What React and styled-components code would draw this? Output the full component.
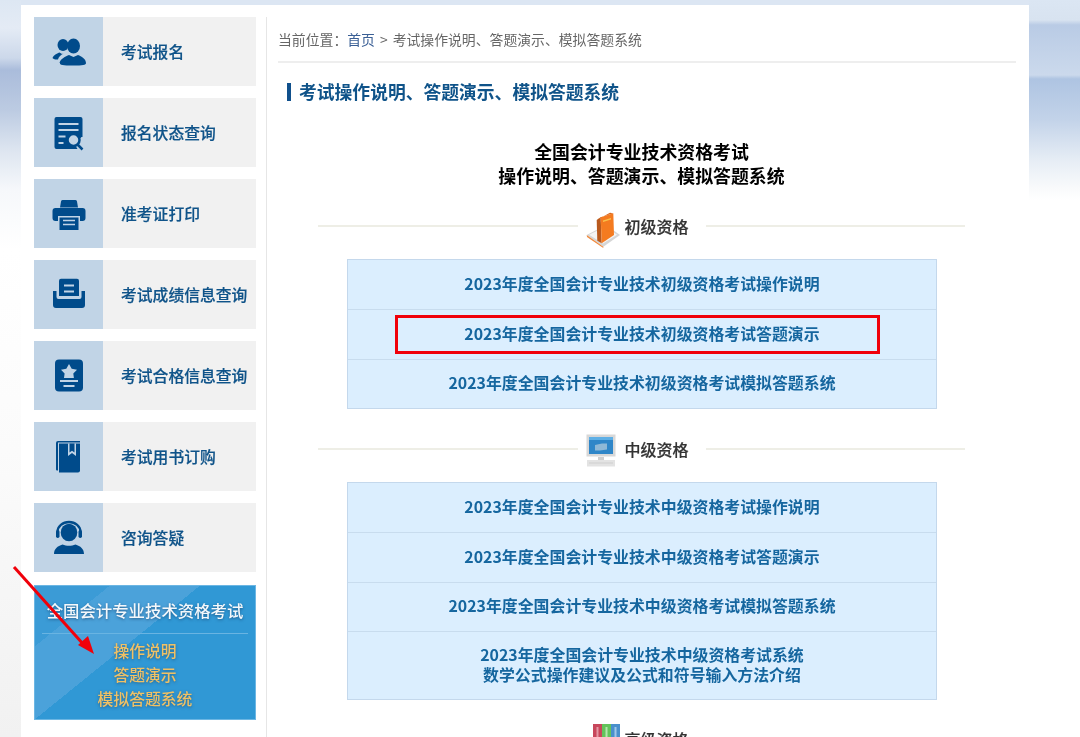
import React from 'react';
import styled, { createGlobalStyle } from 'styled-components';

const GlobalStyle = createGlobalStyle`
  html, body {
    margin: 0;
    padding: 0;
    background: #fff;
  }
  * {
    box-sizing: border-box;
  }
`;

const Page = styled.div`
  position: relative;
  width: 1080px;
  height: 737px;
  overflow: hidden;
  padding: 5px 51px 0 21px;
  font-family: 'Noto Sans CJK SC', 'Liberation Sans', sans-serif;
  filter: blur(0.35px);
  background:
    linear-gradient(
        180deg,
        #dde7f3 0,
        #e4ebf5 28px,
        #ccd8ea 58px,
        #aabcdb 70px,
        #bccbe2 110px,
        #dde5f0 150px,
        #f6f8fb 190px,
        #fff 250px,
        #fbfbfb 450px,
        #f1f1f1 737px
      )
      left top / 21px 100% no-repeat,
    linear-gradient(
        180deg,
        #dbe6f3 0,
        #d8e3f0 20px,
        #b9cbe5 25px,
        #cbd9ec 75px,
        #aec4e2 79px,
        #c3d3e9 120px,
        #e6edf5 160px,
        #fafbfc 190px,
        #fff 200px
      )
      right top / 51px 100% no-repeat,
    #dce6f3;
`;

const Panel = styled.div`
  display: flex;
  height: 732px;
  background: #fff;
  padding: 12px 13px 0;
`;

const Sidebar = styled.aside`
  width: 222px;
  flex: none;
  display: flex;
  flex-direction: column;
  gap: 12px;
`;

const NavItem = styled.a`
  display: flex;
  height: 69px;
  background: #f1f1f1;
`;

const NavIcon = styled.span`
  width: 69px;
  flex: none;
  display: flex;
  align-items: center;
  justify-content: center;
  background: #c1d4e6;
  color: #004b8b;
`;

const NavLabel = styled.span`
  padding: 0 0 1px 18px;
  align-self: center;
  font-size: 15.8px;
  font-weight: 500;
  color: #0f5389;
  -webkit-text-stroke: 0.2px #0f5389;
`;

const Banner = styled.div`
  height: 135px;
  margin-top: 1px;
  padding-top: 13px;
  text-align: center;
  background: linear-gradient(
    141deg,
    #3b9bd6 0 19.7%,
    #4ba2da 19.7% 42.9%,
    #3098d5 42.9%
  );
  box-shadow: inset 0 0 0 1px #6cb6e3;
`;

const BannerTitle = styled.div`
  font-size: 16.4px;
  line-height: 24px;
  font-weight: 500;
  color: #f4f8fb;
  text-shadow: 0 1px 3px rgba(20, 50, 90, 0.6);
`;

const BannerRule = styled.div`
  height: 1px;
  margin: 11px 8px 5px;
  background: #69b4e2;
`;

const BannerLink = styled.div`
  font-size: 15.8px;
  line-height: 24px;
  font-weight: 500;
  color: #f0c165;
  text-shadow: 0 1px 3px rgba(30, 60, 90, 0.55);
`;

const Main = styled.main`
  flex: 1;
  margin-left: 10px;
  padding: 0 0 0 11px;
  border-left: 1px solid #e6e6e6;
`;

const Crumbs = styled.div`
  height: 46px;
  line-height: 45px;
  font-size: 13.85px;
  color: #666;
  border-bottom: 2px solid #eee;

  a {
    color: #3a5f95;
  }
`;

const CrumbSep = styled.span`
  margin: 0 5px;
`;

const Heading = styled.h2`
  margin: 20px 0 0 9px;
  height: 18px;
  padding-left: 8px;
  border-left: 4px solid #10508c;
  font-size: 17.8px;
  line-height: 16px;
  font-weight: 700;
  color: #0f5389;
`;

const Title = styled.h1`
  width: 647px;
  margin: 38px 0 0 40px;
  font-size: 17.9px;
  line-height: 24px;
  font-weight: 700;
  color: #000;
  text-align: center;
`;

const SectionHead = styled.div`
  display: flex;
  align-items: center;
  width: 647px;
  height: 40px;
  margin: ${p => p.$top}px 0 0 40px;

  &::before,
  &::after {
    content: '';
    flex: 1;
    height: 2px;
    background: #eeeee6;
  }
`;

const SectionName = styled.div`
  width: 128px;
  display: flex;
  align-items: center;
  padding-left: 8px;
  font-size: 16px;
  font-weight: 500;
  color: #333;
  -webkit-text-stroke: 0.2px #333;
`;

const SectionIcon = styled.span`
  width: 34px;
  height: 36px;
  margin-right: 5px;
  flex: none;
  display: flex;
  align-items: center;
  justify-content: ${p => p.$justify || 'flex-start'};
  transform: translateY(${p => p.$shift || 0}px);
`;

const Table = styled.div`
  width: 590px;
  margin: 13px 0 0 69px;
  border: 1px solid #c4d8ec;
  background: #dbeefe;
`;

const Row = styled.a`
  position: relative;
  display: flex;
  align-items: center;
  justify-content: center;
  height: ${p => p.$h || 49.33}px;
  padding-bottom: 1px;
  font-size: 15.9px;
  line-height: 20px;
  font-weight: 700;
  color: #15669f;
  text-align: center;
  border-top: ${p => (p.$first ? 'none' : '1px solid #c8dcee')};
`;

const RedBox = styled.span`
  position: absolute;
  left: 47px;
  top: 5px;
  width: 485px;
  height: 39px;
  border: 3px solid #f0000a;
`;

const Arrow = styled.svg`
  position: absolute;
  left: 0;
  top: 0;
  width: 120px;
  height: 680px;
  pointer-events: none;
`;

const People = () => (
  <svg width="40" height="40" viewBox="0 0 40 40" fill="currentColor">
    <ellipse cx="14" cy="13" rx="5.5" ry="6" />
    <path d="M3.500 26c1.500-3.500 5-4.700 7-5.500l2.500 1.500 1.500-.5c-3 1.700-5 3.500-5.500 6-3 .3-5-.5-5.500-1.500z" />
    <ellipse cx="24.500" cy="14" rx="6.500" ry="7.500" />
    <path d="M10.500 31c1-4.500 6-6.500 9.500-8l4.500 2 4.500-2c3.500 1.500 7.800 3.500 8 8 0 2-3 2.500-13 2.500s-13.500-.5-13-2.500z" />
  </svg>
);

const DocSearch = () => (
  <svg width="40" height="40" viewBox="0 0 40 40">
    <path
      fill="currentColor"
      d="M7.500 4h24a2 2 0 0 1 2 2v18h-1l-7 7 3 5H7.500a2 2 0 0 1-2-2V6a2 2 0 0 1 2-2z"
    />
    <path stroke="#c1d4e6" strokeWidth="2" d="M9.500 11h20M9.500 17h20M9.500 23.500h7M9.500 30h5" />
    <circle cx="24.500" cy="27" r="6" fill="#c1d4e6" stroke="currentColor" strokeWidth="2.500" />
    <path stroke="currentColor" strokeWidth="2.500" d="M28.500 31.500l5 5" />
  </svg>
);

const Printer = () => (
  <svg width="40" height="40" viewBox="0 0 40 40" fill="currentColor">
    <path d="M13.500 6h13a1.500 1.500 0 0 1 1.500 1.500l1 6H11l1-6A1.500 1.500 0 0 1 13.500 6z" />
    <path d="M6.500 14h27a3 3 0 0 1 3 3v7a3 3 0 0 1-3 3H31v-5H9v5H6.500a3 3 0 0 1-3-3v-7a3 3 0 0 1 3-3z" />
    <path d="M10.500 23.500h19V36h-19z" />
    <path stroke="#c1d4e6" strokeWidth="1.500" d="M14 26.500h12M14 30.500h12" />
  </svg>
);

const Tray = () => (
  <svg width="40" height="40" viewBox="0 0 40 40" fill="currentColor">
    <path d="M10 5.800a2 2 0 0 1 2-2h16a2 2 0 0 1 2 2V21H10z" />
    <path stroke="#c1d4e6" strokeWidth="2" d="M15 10.500h10M15 16.500h10" />
    <path d="M4 16h3.500v6a2 2 0 0 0 2 2h21a2 2 0 0 0 2-2v-6H36v14a3 3 0 0 1-3 3H7a3 3 0 0 1-3-3z" />
  </svg>
);

const Badge = () => (
  <svg width="40" height="40" viewBox="0 0 40 40" fill="currentColor">
    <rect x="6" y="3.500" width="28" height="32" rx="4" />
    <path fill="#c1d4e6" d="M20 8l2.700 4.700 5.300 1-3.700 3.700.6 4.600H15l.6-4.600L12 13.700l5.300-1z" />
    <path stroke="#c1d4e6" strokeWidth="1.800" d="M11 25h18M14.500 30h11" />
  </svg>
);

const Book = () => (
  <svg width="40" height="40" viewBox="0 0 40 40" fill="currentColor">
    <path d="M7 6a2 2 0 0 1 2-2h22v1.500H9v28H8a1 1 0 0 1-1-1z" />
    <path d="M10 6.500h21v27a2 2 0 0 1-2 2H10z" />
    <path fill="#c1d4e6" d="M19 6.500h8v12.500l-4-3-4 3z" />
    <path fill="currentColor" d="M20.500 6.500h5v9l-2.500-1.800-2.500 1.800z" />
  </svg>
);

const Support = () => (
  <svg width="40" height="40" viewBox="0 0 40 40" fill="currentColor">
    <ellipse cx="20" cy="14.500" rx="8.300" ry="8.800" />
    <path fill="none" stroke="currentColor" strokeWidth="2.300" d="M8.500 17v-3a11.500 10 0 0 1 23 0v3" />
    <rect x="7" y="12" width="3.500" height="8" rx="1.700" />
    <rect x="29.500" y="12" width="3.500" height="8" rx="1.700" />
    <path d="M5 36c0-5 3.500-8 8.500-9.500 4 1.800 9 1.800 13 0 5 1.500 8.500 4.500 8.500 9.500z" />
  </svg>
);

const OrangeBook = () => (
  <svg width="34" height="36" viewBox="0 0 34 36">
    <path fill="#d6d6d6" d="M.7 23L20 13l14 10-16.700 11.700z" />
    <path fill="#f4f4f4" d="M3 22.800L20 14.500l11 8.300L17 31.500z" />
    <path fill="#f0893c" d="M.7 23l16.600 11.700V36L1 25z" />
    <path fill="#b95a1e" d="M10.700 8l4-2.700 1 26-4.400-2.600z" />
    <path fill="#f47b20" d="M14.700 5.300L27.300 1.300l.7 21.700-12.300 8.300z" />
    <path fill="#f9c04a" d="M17 8.500l8-2.500v1.500l-8 2.500z" />
    <path fill="#d9661a" d="M10.700 8L24 .7l3.300.6-12.600 4z" />
  </svg>
);

const Monitor = () => (
  <svg width="30" height="33" viewBox="0 0 30 33">
    <rect x="0.500" y="0.500" width="29" height="22" fill="#d8d8d8" />
    <rect x="3" y="3" width="24" height="17" fill="#2f86c8" />
    <rect x="3" y="3" width="24" height="3" fill="#5fb0e6" />
    <path fill="#8fb8d6" d="M9 11l7-1.500h5v6l-7 1H9z" />
    <path fill="#cfcfcf" d="M12 23h6v3h-6z" />
    <path fill="#e3e3e3" d="M1 26h28v6.500H1z" />
    <path stroke="#cfcfcf" d="M3 29h24" />
  </svg>
);

const SpineBooks = () => (
  <svg width="27" height="30" viewBox="0 0 27 30">
    <rect x="0" y="0" width="9" height="30" fill="#c8475c" />
    <rect x="9" y="0" width="9" height="30" fill="#64c45c" />
    <rect x="18" y="0" width="9" height="30" fill="#4a90cc" />
    <rect x="3.500" y="3" width="2" height="24" fill="#e598a4" />
    <rect x="12.500" y="3" width="2" height="24" fill="#b4e8ae" />
    <rect x="21.500" y="3" width="2" height="24" fill="#a0c8ea" />
  </svg>
);

const navItems = [
  { label: '考试报名', Icon: People },
  { label: '报名状态查询', Icon: DocSearch },
  { label: '准考证打印', Icon: Printer },
  { label: '考试成绩信息查询', Icon: Tray },
  { label: '考试合格信息查询', Icon: Badge },
  { label: '考试用书订购', Icon: Book },
  { label: '咨询答疑', Icon: Support },
];

const base = '2023年度全国会计专业技术';

export default function App() {
  return (
    <>
      <GlobalStyle />
      <Page>
        <Panel>
          <Sidebar>
            {navItems.map(({ label, Icon }) => (
              <NavItem key={label}>
                <NavIcon>
                  <Icon />
                </NavIcon>
                <NavLabel>{label}</NavLabel>
              </NavItem>
            ))}
            <Banner>
              <BannerTitle>全国会计专业技术资格考试</BannerTitle>
              <BannerRule />
              <BannerLink>操作说明</BannerLink>
              <BannerLink>答题演示</BannerLink>
              <BannerLink>模拟答题系统</BannerLink>
            </Banner>
          </Sidebar>
          <Main>
            <Crumbs>
              当前位置：<a>首页</a>
              <CrumbSep>&gt;</CrumbSep>
              考试操作说明、答题演示、模拟答题系统
            </Crumbs>
            <Heading>考试操作说明、答题演示、模拟答题系统</Heading>
            <Title>
              全国会计专业技术资格考试
              <br />
              操作说明、答题演示、模拟答题系统
            </Title>
            <SectionHead $top={19}>
              <SectionName>
                <SectionIcon $shift={4}>
                  <OrangeBook />
                </SectionIcon>
                初级资格
              </SectionName>
            </SectionHead>
            <Table>
              <Row $first>{base}初级资格考试操作说明</Row>
              <Row>
                {base}初级资格考试答题演示
                <RedBox />
              </Row>
              <Row>{base}初级资格考试模拟答题系统</Row>
            </Table>
            <SectionHead $top={20}>
              <SectionName>
                <SectionIcon $shift={2}>
                  <Monitor />
                </SectionIcon>
                中级资格
              </SectionName>
            </SectionHead>
            <Table>
              <Row $first>{base}中级资格考试操作说明</Row>
              <Row>{base}中级资格考试答题演示</Row>
              <Row>{base}中级资格考试模拟答题系统</Row>
              <Row $h={68}>
                {base}中级资格考试系统
                <br />
                数学公式操作建议及公式和符号输入方法介绍
              </Row>
            </Table>
            <SectionHead $top={19}>
              <SectionName>
                <SectionIcon $justify="flex-end">
                  <SpineBooks />
                </SectionIcon>
                高级资格
              </SectionName>
            </SectionHead>
          </Main>
        </Panel>
        <Arrow viewBox="0 0 120 680">
          <path d="M14 567L84 645" stroke="#f0000a" strokeWidth="3" />
          <path d="M94 654L78 645 88 636z" fill="#f0000a" />
        </Arrow>
      </Page>
    </>
  );
}
